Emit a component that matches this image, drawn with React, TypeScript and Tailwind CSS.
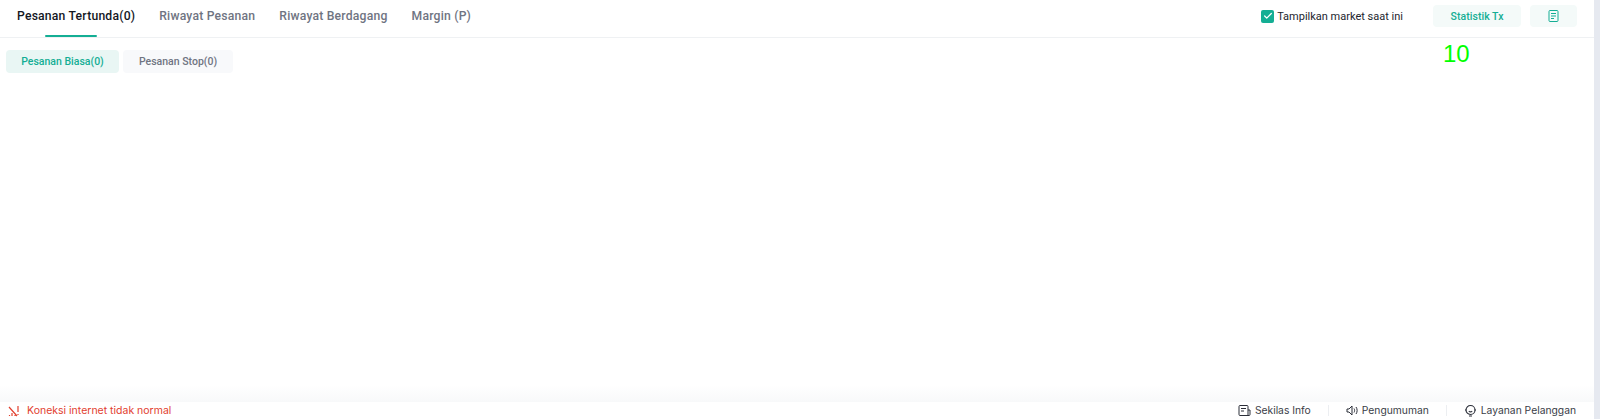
import { Check } from "lucide-react";

const FONT = "font-['Roboto','Noto_Sans',sans-serif]";
const FOOT = "font-['Inter','Noto_Sans',sans-serif]";

function Tabs() {
  const tabs = ["Riwayat Pesanan", "Riwayat Berdagang", "Margin (P)"];
  return (
    <div className="flex items-start gap-6 pl-[17px]">
      <div className="relative h-[37px]">
        <div className="pt-[7px] text-[12.2px] leading-[18px] font-medium tracking-[0.2px] text-[#14171f]">Pesanan Tertunda(0)</div>
        <span className="absolute bottom-0 left-[28px] h-[2px] w-[52px] rounded-sm bg-[#14ae94]" />
      </div>
      {tabs.map((t) => (
        <span key={t} className="pt-[7px] text-[12.2px] leading-[18px] font-medium tracking-[0.2px] text-[#6f7482]">
          {t}
        </span>
      ))}
    </div>
  );
}

function Toolbar() {
  return (
    <div className="flex items-center pt-[5px] pr-[17px]">
      <span className="flex h-[13px] w-[13px] items-center justify-center rounded-[2px] bg-[#14ae94]">
        <Check size={10} strokeWidth={3} color="#fff" />
      </span>
      <span className="ml-[3px] pt-px text-[11px] leading-[14px] text-[#22252e]">Tampilkan market saat ini</span>
      <button className="ml-[30px] flex h-[22px] w-[88px] items-center justify-center rounded bg-[#f4faf9] pt-px text-[10.5px] font-medium tracking-[0.05px] text-[#14ae94]">
        Statistik Tx
      </button>
      <button className="ml-[9px] flex h-[22px] w-[47px] items-center justify-center rounded bg-[#f4faf9]">
        <svg width="11" height="12" viewBox="0 0 11 12" fill="none" stroke="#14ae94" strokeWidth="1">
          <rect x="1" y="0.5" width="9" height="11" rx="1" />
          <path d="M3 3.5h5M3 6h5M3 8.5h3" />
        </svg>
      </button>
    </div>
  );
}

function FooterLinks() {
  return (
    <div className="flex items-center pr-[18px] text-[10.3px] text-[#3a3d47]">
      <span className="flex items-center gap-[4px]">
        <svg width="13" height="13" viewBox="0 0 13 13" fill="none" stroke="#2b2e38" strokeWidth="1">
          <path d="M10 11.5H2a1 1 0 0 1-1-1v-8a1 1 0 0 1 1-1h7a1 1 0 0 1 1 1v9zM10 6h2v4.5a1 1 0 0 1-1 1h-1M3 4.5h5M3 7h3" />
        </svg>
        Sekilas Info
      </span>
      <span className="mx-[17px] h-[11px] w-px bg-[#eceef1]" />
      <span className="flex items-center gap-[3px]">
        <svg width="13" height="13" viewBox="0 0 13 13" fill="none" stroke="#2b2e38" strokeWidth="1">
          <path d="M1 5h2l3-3v9L3 8H1zM8 4.5c.8 1.2.8 2.8 0 4M10 3c1.5 2 1.5 5 0 7" />
        </svg>
        Pengumuman
      </span>
      <span className="mx-[17px] h-[11px] w-px bg-[#eceef1]" />
      <span className="flex items-center gap-[4px]">
        <svg width="13" height="13" viewBox="0 0 13 13" fill="none" stroke="#2b2e38" strokeWidth="1.1">
          <circle cx="6.5" cy="6" r="4.5" />
          <path d="M1 6h1.5M10.5 6H12M4.8 7.2c.9.7 2.5.7 3.4 0M5 12h3" />
        </svg>
        Layanan Pelanggan
      </span>
    </div>
  );
}

export default function App() {
  return (
    <div className={`flex h-[419px] w-full overflow-hidden bg-white ${FONT}`}>
      <div className="flex min-w-0 flex-1 flex-col">
        <div className="flex h-[38px] items-start justify-between border-b border-[#eff1f3]">
          <Tabs />
          <Toolbar />
        </div>
        <div className="relative flex-1">
          <div className="flex gap-[4px] pt-[12px] pl-[6px]">
            <span className="flex h-[23px] w-[113px] items-center justify-center rounded bg-[#e9f6f4] pt-px text-[10.5px] font-medium text-[#14ae94]">
              Pesanan Biasa(0)
            </span>
            <span className="flex h-[23px] w-[110px] items-center justify-center rounded bg-[#f8f9fb] pt-px text-[10.5px] font-medium text-[#6f7482]">
              Pesanan Stop(0)
            </span>
          </div>
          <span className="absolute top-[2px] left-[1443px] font-['Liberation_Sans',sans-serif] text-[24px] leading-[28px] text-[#00ff00]">
            10
          </span>
        </div>
        <div className="h-[17px] bg-gradient-to-b from-white to-[#f8f9fa]" />
        <div className={`flex h-[17px] items-center justify-between bg-white ${FOOT}`}>
          <div className="flex items-center gap-[7px] pl-[8px] text-[10.5px] text-[#e2402f]">
            <svg width="12" height="12" viewBox="0 0 12 12" fill="none" stroke="#e2402f" strokeWidth="1.2">
              <path d="M1 2l8 9M1.5 11v-1M4 11V8M7 11v-1M10 1v6M10 9v1" />
            </svg>
            Koneksi internet tidak normal
          </div>
          <FooterLinks />
        </div>
      </div>
      <div className="w-[6px] bg-[#e6e9f0]" />
    </div>
  );
}
